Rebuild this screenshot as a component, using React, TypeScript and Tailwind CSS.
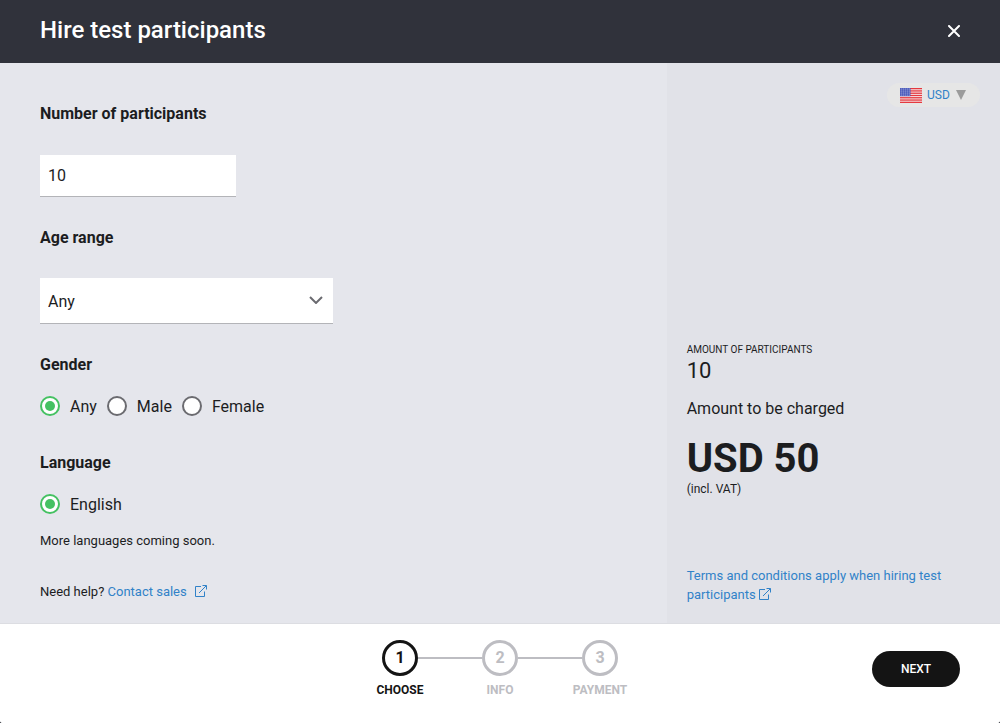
import * as React from 'react';
import { clsx } from 'clsx';

const steps = ['Choose', 'Info', 'Payment'];

const genders = ['Any', 'Male', 'Female'];

const ExternalIcon = ({ className }: { className?: string }) => (
  <svg viewBox="0 0 12 12" fill="none" stroke="currentColor" className={clsx('inline-block h-3 w-3 align-[-1px]', className)} aria-hidden="true">
    <path d="M6 1.5H.5v10h9V6.5" />
    <path d="M4 8 11.3.7M7.5.5h4v4" />
  </svg>
);

const UsFlag = () => (
  <svg viewBox="0 0 22 15" className="h-[15px] w-[22px]" aria-hidden="true">
    <rect width="22" height="15" fill="#f6eff0" />
    {[0, 1, 2, 3, 4, 5, 6].map((i) => (
      <rect key={i} y={i * 2.28} width="22" height="1.3" fill="#e5373d" />
    ))}
    <rect width="10.5" height="8.2" fill="#4454b8" />
    {[0, 1, 2, 3].map((row) =>
      [0, 1, 2, 3, 4].map((col) => (
        <circle key={`${row}-${col}`} cx={1.2 + col * 2} cy={1.1 + row * 2} r="0.5" fill="#e8eaf8" />
      ))
    )}
  </svg>
);

const Radio = ({ name, label, defaultChecked }: { name: string; label: string; defaultChecked?: boolean }) => (
  <label className="flex items-start gap-2.5 leading-[22px]">
    <input
      type="radio"
      name={name}
      defaultChecked={defaultChecked}
      className="grid h-5 w-5 appearance-none place-items-center rounded-full border-2 border-[#6b6b70] bg-white before:h-2.5 before:w-2.5 before:rounded-full checked:border-[#45c162] checked:before:bg-[#45c162]"
    />
    {label}
  </label>
);

const Stepper = ({ current }: { current: number }) => (
  <ol className="flex">
    {steps.map((step, index) => (
      <li
        key={step}
        className={clsx('flex w-[100px] flex-col items-center gap-1.5 font-bold', index === current ? 'text-[#141414]' : 'text-[#bdbdc2]')}
      >
        <div className="flex w-full items-center">
          <span className={clsx('h-0.5 flex-1', index > 0 && 'bg-[#bdbdc2]')} />
          <span className="flex h-9 w-9 items-center justify-center rounded-full border-3 border-current text-base">{index + 1}</span>
          <span className={clsx('h-0.5 flex-1', index < steps.length - 1 && 'bg-[#bdbdc2]')} />
        </div>
        <span className="text-xs leading-4 uppercase">{step}</span>
      </li>
    ))}
  </ol>
);

export default function App() {
  const [participants, setParticipants] = React.useState('10');

  return (
    <div className="min-h-screen bg-[#30323b] font-['Roboto',sans-serif] text-base text-[#1c1d1f]">
      <div className="flex min-h-screen flex-col overflow-hidden rounded-b-[3px] bg-white">
        <header className="flex h-[63px] items-center justify-between bg-[#30323b] px-10 pb-1 text-white">
          <h1 className="text-2xl leading-8 font-medium">Hire test participants</h1>
          <button type="button" aria-label="Close" className="pt-0.5">
            <svg viewBox="0 0 12 12" className="block h-3 w-3" stroke="currentColor" strokeWidth="2" strokeLinecap="round" aria-hidden="true">
              <path d="M1 1l10 10M11 1L1 11" />
            </svg>
          </button>
        </header>

        <div className="flex flex-1 bg-[#e5e6ec]">
          <main className="w-2/3 px-10 pt-[41px] pb-5">
            <label htmlFor="participants" className="mb-[31px] block leading-5 font-bold">
              Number of participants
            </label>
            <input
              id="participants"
              type="text"
              value={participants}
              onChange={(e) => setParticipants(e.target.value)}
              className="mb-[31px] block h-[42px] w-[196px] border-b border-[#b3b4b8] bg-white px-2 outline-none"
            />

            <label htmlFor="age" className="mb-[30px] block leading-5 font-bold">
              Age range
            </label>
            <div className="relative mb-[31px] w-[293px]">
              <select id="age" className="block h-[46px] w-full appearance-none border-b border-[#b3b4b8] bg-white px-2 pt-0.5 outline-none">
                <option>Any</option>
                <option>18-34</option>
                <option>35-54</option>
              </select>
              <svg viewBox="0 0 14 8" fill="none" stroke="#6b6b70" strokeWidth="2" className="pointer-events-none absolute top-[18px] right-2.5 h-2 w-3.5" aria-hidden="true">
                <path d="M1 1l6 6 6-6" />
              </svg>
            </div>

            <fieldset className="mb-[35px]">
              <legend className="mb-[21px] leading-5 font-bold">Gender</legend>
              <div className="flex gap-2.5">
                {genders.map((gender) => (
                  <Radio key={gender} name="gender" label={gender} defaultChecked={gender === 'Any'} />
                ))}
              </div>
            </fieldset>

            <fieldset className="mb-[15px]">
              <legend className="mb-[21px] leading-5 font-bold">Language</legend>
              <Radio name="language" label="English" defaultChecked />
            </fieldset>

            <p className="mb-[31px] text-[13px] leading-5">More languages coming soon.</p>
            <p className="text-[13px] leading-5">
              Need help?{' '}
              <a href="#sales" className="text-[#3182c8]">
                Contact sales
                <ExternalIcon className="ml-2" />
              </a>
            </p>
          </main>

          <aside className="flex w-1/3 flex-col bg-[#e1e2e8] px-5 pt-5 pb-[19px]">
            <div className="flex h-6 items-center gap-[5px] self-end rounded-full bg-[#e6e6e6] pr-3.5 pl-[13px]">
              <UsFlag />
              <select aria-label="Currency" className="w-6 appearance-none text-xs text-[#3182c8] outline-none">
                <option>USD</option>
                <option>EUR</option>
              </select>
              <svg viewBox="0 0 10 10" className="h-2.5 w-2.5" fill="#9b9b9b" aria-hidden="true">
                <path d="M0 0h10L5 10z" />
              </svg>
            </div>

            <div className="mt-auto">
              <p className="text-[10px] leading-4 uppercase">Amount of participants</p>
              <p className="text-[22px] leading-[26px]">{participants}</p>
              <p className="mt-[15px] leading-5">Amount to be charged</p>
              <p className="mt-5 text-[40px] leading-10 font-bold">USD {Number(participants) * 5}</p>
              <p className="text-xs leading-5">(incl. VAT)</p>
            </div>

            <a href="#terms" className="mt-[67px] text-[13px] leading-[19px] text-[#3182c8]">
              Terms and conditions apply when hiring test participants <ExternalIcon />
            </a>
          </aside>
        </div>

        <footer className="grid grid-cols-[1fr_auto_1fr] items-center border-t border-[#dcdde2] bg-white px-10 pt-4 pb-[25px]">
          <div className="col-start-2">
            <Stepper current={0} />
          </div>
          <button type="button" className="h-9 w-[88px] justify-self-end rounded-full bg-[#141414] text-xs font-medium text-white uppercase">
            Next
          </button>
        </footer>
      </div>
    </div>
  );
}
